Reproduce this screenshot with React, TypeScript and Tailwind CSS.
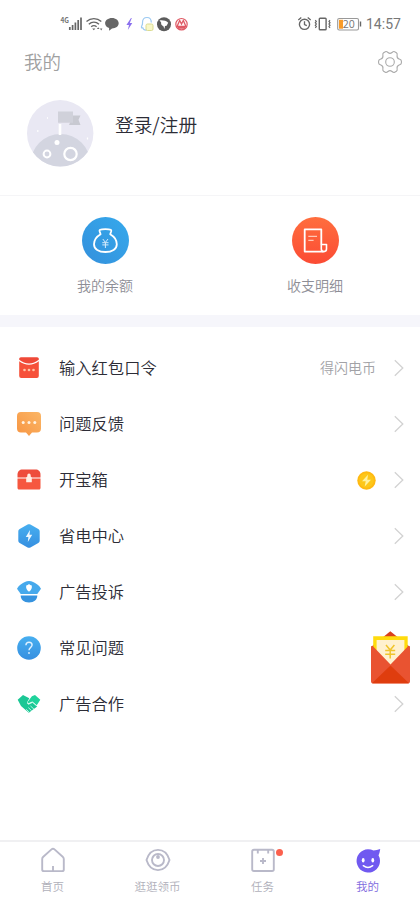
import type { ReactNode } from 'react';

type MenuItem = {
  label: string;
  icon: ReactNode;
  extra?: ReactNode;
};

type Tab = {
  label: string;
  icon: ReactNode;
  active?: boolean;
};

/* ========================
    BARRE DE STATUT
   ======================== */

function StatusBar() {
  return (
    <div className="flex h-10 shrink-0 items-center justify-between pt-2 pr-[19px] pl-[60px] text-[#666]">
      <svg width="130" height="20" viewBox="0 0 130 20" fill="none">
        <text x="0.5" y="8.5" fontSize="7" fontWeight="700" fill="#777" textLength="8.5" lengthAdjust="spacingAndGlyphs">
          4G
        </text>
        <path d="M9.8 16v-3M12.6 16v-5M15.4 16V8.5M18.2 16V6M21 16V3.5" stroke="#666" strokeWidth="1.7" />
        <path d="M26.5 7.500c4.200-3.900 10.600-3.900 14.800 0M28.800 10.300c3-2.700 7.200-2.700 10.200 0M31.200 12.800c1.600-1.400 3.800-1.400 5.400 0" stroke="#666" strokeWidth="1.400" />
        <path d="m33.800 16.300-1.600-1.800h3.200zM38.200 13.200l1.300 1.800h-2.600zM41.200 16.400l1.200-1.800H40z" fill="#666" />
        <path d="M52 4c3.800 0 6.700 2.300 6.700 5.200 0 2.900-2.900 5.200-6.700 5.200l-2.900 2.400v-2.700c-2.500-.8-4-2.600-4-4.900C45.100 6.300 48.100 4 52 4z" fill="#666" />
        <path d="m71 4-4.600 7h2.600l-1.200 5 4.500-7h-2.500L71.800 4z" fill="#8b70ee" />
        <path d="M83 13.500c-1.500 1-2 0-1.200-1.800.9-1.500.7-1.500.7-3.200C82.500 5.500 84.200 3.500 87 3.500s4.300 2 4.300 5M83 13.500c0 1.500 1 3 4 2.500" stroke="#9ccaf2" strokeWidth="1.200" />
        <rect x="86" y="10" width="7" height="6.500" rx="1.500" fill="#f8f7c7" stroke="#dadb91" />
        <circle cx="104" cy="10.200" r="7" fill="#5c5c5c" />
        <path d="M99.500 6.500c3.500-.5 6.500.4 8.700 2.200l-1.600 3-1.600.2-.6 3.100-1-2.700c-1.700-.8-2.700-2.200-2.200-3.200.2-.8-.7-1.500-1.700-2.600z" fill="#fff" />
        <circle cx="121.500" cy="10.200" r="5.700" fill="#fff6f6" stroke="#df5964" strokeWidth="1.200" />
        <path d="m117 12.500 2.700-6 1.800 3.500 1.800-3.500 2.700 6zM118 14h7" stroke="#df5964" strokeWidth="1.300" />
      </svg>
      <div className="flex items-center">
        <svg width="65" height="18" viewBox="0 0 65 18" fill="none" stroke="#666">
          <circle cx="7.500" cy="9.300" r="5.100" strokeWidth="1.400" />
          <path d="M7.500 6.300v3.300l2.300 1M1.300 5l3-2.500M13.700 5l-3-2.500" strokeWidth="1.300" />
          <rect x="22.300" y="3.200" width="6.800" height="11.600" rx=".8" strokeWidth="1.400" />
          <path d="m18.300 5.200 1 1.200-1 1.300 1 1.300-1 1.300 1 1.300-1 1.300M33 5.200l-1 1.200 1 1.300-1 1.300 1 1.300-1 1.300 1 1.300" strokeWidth="1.200" />
          <rect x="40.700" y="3.500" width="20.800" height="11.500" rx="1.500" stroke="#999" strokeWidth="1.100" />
          <rect x="42" y="4.800" width="4" height="8.900" fill="#f99b27" stroke="none" />
          <path d="M63.500 6.500v5" strokeWidth="1.400" />
          <text x="51.700" y="13.200" textAnchor="middle" fontSize="11" fill="#777" stroke="none">
            20
          </text>
        </svg>
        <span className="ml-1 w-[35px] font-[Roboto] text-[14px] leading-5 font-normal whitespace-nowrap text-[#777]">14:57</span>
      </div>
    </div>
  );
}

/* ========================
    PROFIL
   ======================== */

function GearIcon() {
  return (
    <svg width="24" height="24" viewBox="0 0 24 24" fill="none" stroke="#aaa" strokeWidth="1.1">
      <path d="M7.300 1.800c1.100-.7 2 .1 2.700.7 1.200 1 2.800 1 4 0 .7-.6 1.600-1.400 2.700-.7l1.700 1c1.100.7.9 1.800.7 2.700-.3 1.600.5 2.900 2 3.500.9.300 2.300.7 2.300 2v2c0 1.300-1.400 1.700-2.300 2-1.500.6-2.300 1.900-2 3.500.2.900.4 2-.7 2.700l-1.700 1c-1.100.7-2-.1-2.700-.7-1.200-1-2.800-1-4 0-.7.600-1.600 1.400-2.700.7l-1.700-1c-1.100-.7-.9-1.800-.7-2.700.3-1.600-.5-2.900-2-3.500-.9-.3-2.300-.7-2.300-2v-2c0-1.300 1.400-1.700 2.300-2 1.500-.6 2.300-1.900 2-3.500-.2-.9-.4-2 .7-2.700z" />
      <circle cx="12" cy="12" r="4.300" />
    </svg>
  );
}

function Avatar() {
  return (
    <svg width="67" height="67" viewBox="0 0 67 67">
      <defs>
        <clipPath id="avatar-clip">
          <circle cx="33.200" cy="33.300" r="33.200" />
        </clipPath>
      </defs>
      <g clipPath="url(#avatar-clip)">
        <rect width="67" height="67" fill="#e9e8f3" />
        <circle cx="33.500" cy="64" r="30" fill="#d3d5e0" />
        <path d="M46 15.500h7.500l-2 4.200 2 5.300H42z" fill="#c8c9d1" />
        <path d="M31 11.500h15v11.200H31z" fill="#d0d1da" />
        <path d="M31.700 24h2.600v11h-2.600z" fill="#fff" />
        <circle cx="30" cy="42.500" r="2.500" fill="#fff" />
        <circle cx="20" cy="54" r="3.400" fill="#d3d5e0" stroke="#fff" strokeWidth="2" />
        <circle cx="43.500" cy="54" r="6.200" fill="#d3d5e0" stroke="#fff" strokeWidth="2.200" />
        <path d="M10 31h1.500M60.500 37.500v2M20 18h1" stroke="#fff" strokeWidth="1.300" />
      </g>
    </svg>
  );
}

function BalanceIcon() {
  return (
    <svg width="47" height="47" viewBox="0 0 47 47" fill="none">
      <defs>
        <linearGradient id="balance-bg" x1="1" y1="0" x2="0" y2="1">
          <stop stopColor="#35a9ec" />
          <stop offset="1" stopColor="#3490dc" />
        </linearGradient>
      </defs>
      <circle cx="23.500" cy="23.500" r="23.500" fill="url(#balance-bg)" />
      <path
        d="M18.600 17.200l-1-3c-.3-1 .2-1.600 1.200-1.600 1.200 0 1.700-.4 4.600-.4s3.400.4 4.600.4c1 0 1.500.6 1.200 1.600l-1 3c3.700 2.100 6.600 5.600 6.600 10 0 4.800-4.700 7.800-11.400 7.800S12 32 12 27.200c0-4.400 2.900-7.900 6.600-10z"
        stroke="#fff"
        strokeWidth="1.800"
        strokeLinejoin="round"
      />
      <path d="m20.800 22 2.600 3.400L26 22M20.300 25.700h6.200M20.300 27.900h6.200M23.400 25.500V31" stroke="#d5ebfb" strokeWidth="1" />
    </svg>
  );
}

function BillIcon() {
  return (
    <svg width="47" height="47" viewBox="0 0 47 47" fill="none">
      <defs>
        <linearGradient id="bill-bg" x1="0" y1="0" x2="0" y2="1">
          <stop stopColor="#ff6e3e" />
          <stop offset="1" stopColor="#fb4b34" />
        </linearGradient>
      </defs>
      <circle cx="23.500" cy="23.500" r="23.500" fill="url(#bill-bg)" />
      <path d="M29.300 27.500V12.400H12.700v22.200h18.600" stroke="#fff" strokeWidth="1.800" strokeLinejoin="round" />
      <path d="M29.300 32V27.500h5.200v4.600c0 1.500-1 2.500-2.600 2.500s-2.600-1-2.600-2.600z" stroke="#fff" strokeWidth="1.600" strokeLinejoin="round" />
      <path d="M16.300 19.400h8.700M16.300 23.400h5.300" stroke="#ffc7b5" strokeWidth="1.300" />
    </svg>
  );
}

/* ========================
    MENU
   ======================== */

function PacketIcon() {
  return (
    <svg width="24" height="24" viewBox="0 0 24 24">
      <path d="M2.200 5.300C8 9.900 16 9.900 21.800 5.300V20a2 2 0 0 1-2 2H4.200a2 2 0 0 1-2-2z" fill="#f6513a" />
      <path d="M2.200 3.800V3c0-1 .8-1.700 1.700-1.700h16.200c1 0 1.700.7 1.700 1.700v.8C16 8.600 8 8.600 2.200 3.800z" fill="#ef4938" />
      <g fill="#ffc3a5">
        <circle cx="7.500" cy="14" r="1.300" />
        <circle cx="12" cy="14" r="1.300" />
        <circle cx="16.500" cy="14" r="1.300" />
      </g>
    </svg>
  );
}

function FeedbackIcon() {
  return (
    <svg width="24" height="24" viewBox="0 0 24 24">
      <defs>
        <linearGradient id="feedback-bg" x1="1" y1="0" x2="0" y2="1">
          <stop stopColor="#fbb666" />
          <stop offset="1" stopColor="#f79542" />
        </linearGradient>
      </defs>
      <path d="M4 0h16a4 4 0 0 1 4 4v12.500a4 4 0 0 1-4 4h-5L12 24l-3-3.500H4a4 4 0 0 1-4-4V4a4 4 0 0 1 4-4z" fill="url(#feedback-bg)" />
      <g fill="#fff3e2">
        <circle cx="6.200" cy="10.500" r="1.500" />
        <circle cx="12" cy="10.500" r="1.500" />
        <circle cx="17.800" cy="10.500" r="1.500" />
      </g>
    </svg>
  );
}

function ChestIcon() {
  return (
    <svg width="24" height="24" viewBox="0 0 24 24">
      <path d="M.5 9.500V6.600c0-3 2-5 5-5h13c3 0 5 2 5 5v2.900z" fill="#ee4d3c" />
      <path d="M.5 10.500h23v9.600c0 .9-.6 1.500-1.500 1.500H2c-.9 0-1.500-.6-1.500-1.500z" fill="#f6573f" />
      <path d="M10.300 7.200a1.700 1.700 0 0 1 3.400 0v1.200l1.100 1v4.900H9.200V9.400l1.100-1z" fill="#fff0e6" />
    </svg>
  );
}

function PowerIcon() {
  return (
    <svg width="24" height="24" viewBox="0 0 24 24">
      <defs>
        <linearGradient id="blue-bg" x1="0" y1="0" x2="0" y2="1">
          <stop stopColor="#47aff0" />
          <stop offset="1" stopColor="#368fe0" />
        </linearGradient>
      </defs>
      <path d="M10.600.6c.9-.5 1.900-.5 2.800 0l7.900 4.500c.9.500 1.400 1.400 1.400 2.400v9c0 1-.5 1.900-1.400 2.400l-7.900 4.500c-.9.500-1.900.5-2.800 0l-7.900-4.500c-.9-.5-1.400-1.400-1.400-2.400v-9c0-1 .5-1.900 1.400-2.400z" fill="url(#blue-bg)" />
      <path d="m13 6-4.200 6.900h2.600L10.800 18l4.400-7.300h-2.700z" fill="#eef8ff" />
    </svg>
  );
}

function PoliceIcon() {
  return (
    <svg width="24" height="24" viewBox="0 0 24 24">
      <path d="M12 1c3.200 0 5 1.200 8.300 3.500C21.600 5.500 23 7 24 8.800L20.300 14H3.700L0 8.800C1 7 2.400 5.500 3.700 4.500 7 2.200 8.800 1 12 1z" fill="#46a9ec" />
      <path d="M12 4c.8.900 1.700 1.300 2.800 1.400.4 2.700-.5 4.800-2.800 6.400-2.300-1.600-3.200-3.700-2.800-6.400C10.300 5.300 11.200 4.900 12 4z" fill="#fff" />
      <path d="M3.700 15.500h16.600c0 4.200-3 6.900-8.300 6.900s-8.300-2.700-8.300-6.900z" fill="#3693df" />
    </svg>
  );
}

function HelpIcon() {
  return (
    <svg width="24" height="24" viewBox="0 0 24 24" fill="none">
      <circle cx="12" cy="12" r="11.800" fill="url(#blue-bg)" />
      <path d="M8.900 9.300C9 7.400 10.200 6.300 12 6.300s3.100 1.100 3.100 2.800c0 2.200-3.100 2.400-3.100 5.200" stroke="#dff1ff" strokeWidth="1.400" />
      <circle cx="12" cy="17" r=".9" fill="#dff1ff" />
    </svg>
  );
}

function HandshakeIcon() {
  return (
    <svg width="24" height="24" viewBox="0 0 24 24" fill="none">
      <path d="M.7 7.800 6 3l6.300 3.300L10 10.500l1.600 1.700 4-1.800 4.600 4-8.400 6.300L4 13.900z" fill="#1bc795" />
      <path d="m10.400 10.200 4.500-5.900L18 3l5.300 4.700-3.500 5.500-4.500-3.600-3.700 1.700z" fill="#20d39c" />
      <path d="m13.500 14 3.500 3.200M11.400 15.700l3.100 2.900M9.300 17.300l2.700 2.800" stroke="#e9fff7" strokeWidth=".8" />
      <path d="m10 11 1.500 1.300 4-1.900 4 3.300" stroke="#c8f7e8" strokeWidth=".8" />
    </svg>
  );
}

function CoinIcon() {
  return (
    <svg width="19" height="19" viewBox="0 0 19 19">
      <circle cx="9.500" cy="9.500" r="9.200" fill="#ffb912" />
      <circle cx="9.500" cy="9.500" r="7.300" fill="#fdc719" />
      <path d="M11 3.800 5 10.300h3.700l-1 5.300L14 8.800h-3.700z" fill="#fff2a1" />
    </svg>
  );
}

const menuItems: MenuItem[] = [
  {
    label: '输入红包口令',
    icon: <PacketIcon />,
    extra: <span className="pb-0.5 text-[14px] text-[#a2a2a6]">得闪电币</span>,
  },
  { label: '问题反馈', icon: <FeedbackIcon /> },
  { label: '开宝箱', icon: <ChestIcon />, extra: <CoinIcon /> },
  { label: '省电中心', icon: <PowerIcon /> },
  { label: '广告投诉', icon: <PoliceIcon /> },
  { label: '常见问题', icon: <HelpIcon /> },
  { label: '广告合作', icon: <HandshakeIcon /> },
];

function MenuRow({ item }: { item: MenuItem }) {
  return (
    <li className="flex h-14 items-center pr-4 pl-[17px]">
      {item.icon}
      <span className="ml-[18px] flex-1 pb-0.5 text-[16.3px] text-[#2c2c36]">{item.label}</span>
      {item.extra}
      <svg className="ml-[18px]" width="10" height="18" viewBox="0 0 10 18" fill="none">
        <path d="m.8 1.200 8 7.800-8 7.800" stroke="#d2d2d2" strokeWidth="1.300" />
      </svg>
    </li>
  );
}

function RedEnvelope() {
  return (
    <svg className="absolute top-[631px] left-[370px]" width="41" height="53" viewBox="0 0 41 53">
      <path d="M1 16 20.300.2 40 16v30H1z" fill="#d9401b" />
      <path d="M3.200 5.300h34.500V34H3.200z" fill="#ffdb0d" />
      <path d="M6.600 9h27.800v27H6.600z" fill="#fff1cf" />
      <path d="M1 16.500c0-1.500 1-2 2.200-.9L20.500 33.500l17.300-17.900c1.200-1.100 2.200-.6 2.200.9v34a2 2 0 0 1-2 2H3a2 2 0 0 1-2-2z" fill="#e95331" />
      <path d="M2 52.200 20.500 34.500 39 52.200z" fill="#df3d0e" />
      <path d="m16 14 4.200 5 4.200-5M15.200 19.500h10M15.200 23.300h10M20.200 19v8.500" stroke="#f0c52c" strokeWidth="1.500" fill="none" />
    </svg>
  );
}

/* ========================
    NAVIGATION
   ======================== */

const tabs: Tab[] = [
  {
    label: '首页',
    icon: (
      <svg width="26" height="26" viewBox="0 0 26 26" fill="none" stroke="#b9b9c9" strokeWidth="1.900">
        <path d="M11.500 2.400 3.300 9.700c-.8.700-1.100 1.400-1.100 2.300v10.400c0 1 .7 1.700 1.700 1.700h18.200c1 0 1.700-.7 1.700-1.700V12c0-.9-.3-1.600-1.100-2.300l-8.200-7.300c-.9-.8-2.100-.8-3 0zM13 19v5" strokeLinejoin="round" />
      </svg>
    ),
  },
  {
    label: '逛逛领币',
    icon: (
      <svg width="26" height="26" viewBox="0 0 26 26" fill="none" stroke="#b9b9c9" strokeWidth="1.900">
        <path d="M1.500 13C3.500 6.500 7.500 2.900 13 2.900S22.500 6.500 24.500 13C22.500 19.500 18.500 23.100 13 23.100S3.500 19.500 1.500 13z" strokeLinejoin="round" />
        <circle cx="13" cy="13" r="6" />
        <circle cx="13" cy="10" r="1.900" fill="#b9b9c9" stroke="none" />
      </svg>
    ),
  },
  {
    label: '任务',
    icon: (
      <span className="relative">
        <svg width="26" height="26" viewBox="0 0 26 26" fill="none" stroke="#b9b9c9" strokeWidth="1.900">
          <rect x="2.200" y="2.700" width="21.600" height="21.300" rx="1.800" />
          <path d="M7.800 3v3.500M18.200 3v3.500M13 11v6M10 14h6" />
        </svg>
        <span className="absolute top-0.5 left-[26px] size-[7px] rounded-full bg-[#fb604d]" />
      </span>
    ),
  },
  {
    label: '我的',
    active: true,
    icon: (
      <svg width="26" height="26" viewBox="0 0 26 26" fill="none">
        <path d="M25.200 2c-.3 2.600-.8 4.500-1.700 6.200A11.700 11.700 0 1 1 13 2.200c2 0 3.800.4 5.500 1.200C20.600 3.300 23 2.700 25.200 2z" fill="#7059f0" />
        <ellipse cx="8.200" cy="13.300" rx="1.400" ry="2.200" fill="#fff" />
        <ellipse cx="17.800" cy="13.300" rx="1.400" ry="2.200" fill="#fff" />
        <path d="M8.300 18.700c2.800 2.200 6.600 2.200 9.400 0" stroke="#fff" strokeWidth="1.500" strokeLinecap="round" />
      </svg>
    ),
  },
];

function TabBar() {
  return (
    <nav className="grid h-[60px] shrink-0 grid-cols-4 border-t-2 border-[#f0f0f2]">
      {tabs.map((tab) => (
        <div key={tab.label} className="flex flex-col items-center pt-[5px]">
          <span className="flex h-[26px]">{tab.icon}</span>
          <span
            className={
              tab.active
                ? 'mt-[5px] text-[11.5px] leading-4 text-[#806ade]'
                : 'mt-[5px] text-[11.5px] leading-4 text-[#b0b0ba]'
            }
          >
            {tab.label}
          </span>
        </div>
      ))}
    </nav>
  );
}

export default function App() {
  return (
    <div className="relative flex h-[900px] w-[420px] flex-col overflow-hidden bg-white font-['Noto_Sans_CJK_SC',sans-serif] font-[350]">
      <StatusBar />

      <header className="flex h-[43px] shrink-0 items-center justify-between pr-[18px] pl-6">
        <h1 className="text-[18.5px] font-[350] text-[#a0a0a0]">我的</h1>
        <GearIcon />
      </header>

      <section className="flex h-[113px] shrink-0 items-start border-b border-[#f5f5f7] pt-[17px] pl-[27px]">
        <Avatar />
        <span className="mt-2.5 ml-[21px] text-[18.7px] leading-7 text-[#2c2c36]">登录/注册</span>
      </section>

      <section className="grid h-[119px] shrink-0 grid-cols-2 pt-[21px]">
        <div className="flex flex-col items-center">
          <BalanceIcon />
          <span className="mt-[11px] text-[14px] leading-5 text-[#8e8e96]">我的余额</span>
        </div>
        <div className="flex flex-col items-center">
          <BillIcon />
          <span className="mt-[11px] text-[14px] leading-5 text-[#8e8e96]">收支明细</span>
        </div>
      </section>

      <div className="h-3 shrink-0 bg-[#f6f6fb]" />

      <ul className="flex-1 pt-[13px]">
        {menuItems.map((item) => (
          <MenuRow key={item.label} item={item} />
        ))}
      </ul>

      <TabBar />
      <RedEnvelope />
    </div>
  );
}
